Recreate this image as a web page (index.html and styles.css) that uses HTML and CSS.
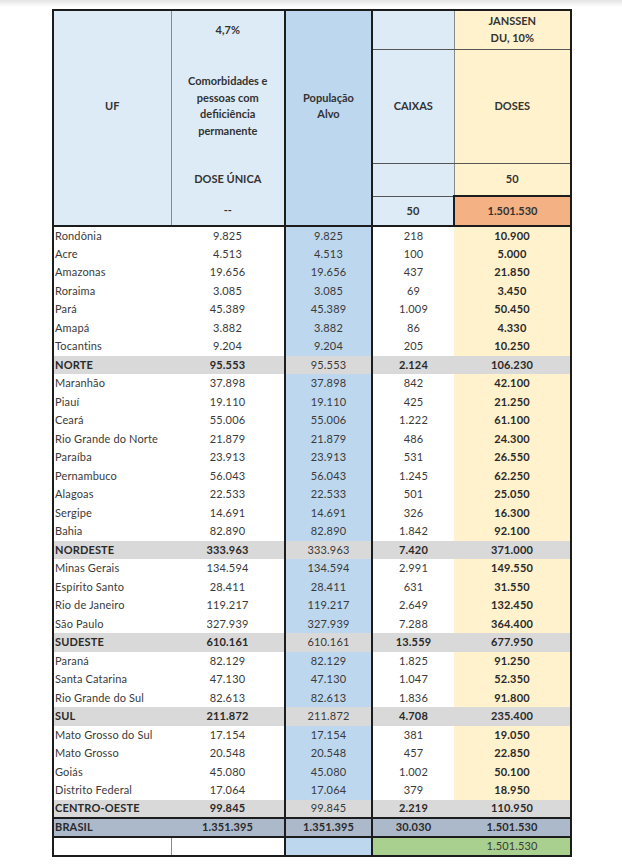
FILE: index.html
```html
<!DOCTYPE html>
<html lang="pt-BR">
<head>
<meta charset="utf-8">
<title>Distribuição Janssen</title>
<link rel="stylesheet" href="styles.css">
</head>
<body>
<div class="sheet">
<table class="grid">
<colgroup>
<col class="w-uf"><col class="w-com"><col class="w-pop"><col class="w-cx"><col class="w-ds">
</colgroup>
<thead>
<tr class="h1">
  <td class="c-uf"></td>
  <td class="c-com">4,7%</td>
  <td class="c-pop"></td>
  <td class="c-cx hb"></td>
  <td class="c-ds hb">JANSSEN<br>DU, 10%</td>
</tr>
<tr class="h2">
  <td class="c-uf">UF</td>
  <td class="c-com">Comorbidades e<br>pessoas com<br>defiiciência<br>permanente</td>
  <td class="c-pop">População<br>Alvo</td>
  <td class="c-cx hb">CAIXAS</td>
  <td class="c-ds hb">DOSES</td>
</tr>
<tr class="h3">
  <td class="c-uf"></td>
  <td class="c-com">DOSE ÚNICA</td>
  <td class="c-pop"></td>
  <td class="c-cx hb"></td>
  <td class="c-ds hbk">50</td>
</tr>
<tr class="h4">
  <td class="c-uf"></td>
  <td class="c-com">--</td>
  <td class="c-pop"></td>
  <td class="c-cx">50</td>
  <td class="c-ds c-hot">1.501.530</td>
</tr>
</thead>
<tbody>
<tr><td>Rondônia</td><td>9.825</td><td>9.825</td><td>218</td><td>10.900</td></tr>
<tr><td>Acre</td><td>4.513</td><td>4.513</td><td>100</td><td>5.000</td></tr>
<tr><td>Amazonas</td><td>19.656</td><td>19.656</td><td>437</td><td>21.850</td></tr>
<tr><td>Roraima</td><td>3.085</td><td>3.085</td><td>69</td><td>3.450</td></tr>
<tr><td>Pará</td><td>45.389</td><td>45.389</td><td>1.009</td><td>50.450</td></tr>
<tr><td>Amapá</td><td>3.882</td><td>3.882</td><td>86</td><td>4.330</td></tr>
<tr><td>Tocantins</td><td>9.204</td><td>9.204</td><td>205</td><td>10.250</td></tr>
<tr class="sub"><td>NORTE</td><td>95.553</td><td>95.553</td><td>2.124</td><td>106.230</td></tr>
<tr><td>Maranhão</td><td>37.898</td><td>37.898</td><td>842</td><td>42.100</td></tr>
<tr><td>Piauí</td><td>19.110</td><td>19.110</td><td>425</td><td>21.250</td></tr>
<tr><td>Ceará</td><td>55.006</td><td>55.006</td><td>1.222</td><td>61.100</td></tr>
<tr><td>Rio Grande do Norte</td><td>21.879</td><td>21.879</td><td>486</td><td>24.300</td></tr>
<tr><td>Paraíba</td><td>23.913</td><td>23.913</td><td>531</td><td>26.550</td></tr>
<tr><td>Pernambuco</td><td>56.043</td><td>56.043</td><td>1.245</td><td>62.250</td></tr>
<tr><td>Alagoas</td><td>22.533</td><td>22.533</td><td>501</td><td>25.050</td></tr>
<tr><td>Sergipe</td><td>14.691</td><td>14.691</td><td>326</td><td>16.300</td></tr>
<tr><td>Bahia</td><td>82.890</td><td>82.890</td><td>1.842</td><td>92.100</td></tr>
<tr class="sub"><td>NORDESTE</td><td>333.963</td><td>333.963</td><td>7.420</td><td>371.000</td></tr>
<tr><td>Minas Gerais</td><td>134.594</td><td>134.594</td><td>2.991</td><td>149.550</td></tr>
<tr><td>Espírito Santo</td><td>28.411</td><td>28.411</td><td>631</td><td>31.550</td></tr>
<tr><td>Rio de Janeiro</td><td>119.217</td><td>119.217</td><td>2.649</td><td>132.450</td></tr>
<tr><td>São Paulo</td><td>327.939</td><td>327.939</td><td>7.288</td><td>364.400</td></tr>
<tr class="sub"><td>SUDESTE</td><td>610.161</td><td>610.161</td><td>13.559</td><td>677.950</td></tr>
<tr><td>Paraná</td><td>82.129</td><td>82.129</td><td>1.825</td><td>91.250</td></tr>
<tr><td>Santa Catarina</td><td>47.130</td><td>47.130</td><td>1.047</td><td>52.350</td></tr>
<tr><td>Rio Grande do Sul</td><td>82.613</td><td>82.613</td><td>1.836</td><td>91.800</td></tr>
<tr class="sub"><td>SUL</td><td>211.872</td><td>211.872</td><td>4.708</td><td>235.400</td></tr>
<tr><td>Mato Grosso do Sul</td><td>17.154</td><td>17.154</td><td>381</td><td>19.050</td></tr>
<tr><td>Mato Grosso</td><td>20.548</td><td>20.548</td><td>457</td><td>22.850</td></tr>
<tr><td>Goiás</td><td>45.080</td><td>45.080</td><td>1.002</td><td>50.100</td></tr>
<tr><td>Distrito Federal</td><td>17.064</td><td>17.064</td><td>379</td><td>18.950</td></tr>
<tr class="sub"><td>CENTRO-OESTE</td><td>99.845</td><td>99.845</td><td>2.219</td><td>110.950</td></tr>
<tr class="total"><td>BRASIL</td><td>1.351.395</td><td>1.351.395</td><td>30.030</td><td>1.501.530</td></tr>
<tr class="last"><td></td><td></td><td></td><td class="green"></td><td class="green">1.501.530</td></tr>
</tbody>
</table>
</div>
</body>
</html>
```
FILE: styles.css
```css
html, body {
  margin: 0;
  padding: 0;
}
body {
  background: #fff linear-gradient(#e4e4e4, #ffffff 7px) no-repeat;
  font-family: Lato, "Open Sans", "Liberation Sans", sans-serif;
  color: #333;
}
.sheet {
  padding: 9px 0 0 52px;
}
.grid {
  border-collapse: collapse;
  table-layout: fixed;
  width: 518px;
  border: 2px solid #1c1c1c;
}
.w-uf { width: 118px; }
.w-com { width: 114px; }
.w-pop { width: 87px; }
.w-cx { width: 82px; }
.w-ds { width: 117px; }

.grid td {
  padding: 0;
  text-align: center;
  vertical-align: middle;
  white-space: nowrap;
}

/* header */
thead td {
  font-weight: 700;
  font-size: 11px;
  line-height: 16.5px;
  color: #333;
}
.h1 { height: 39px; }
.h2 { height: 114px; }
.h3 { height: 33px; }
.h4 { height: 30px; }
thead .c-uf { background: #ddebf7; border-right: 1px solid #8a8a8a; }
thead .c-com { background: #ddebf7; border-right: 2px solid #1c1c1c; }
thead .c-pop { background: #bdd7ee; border-right: 2px solid #1c1c1c; }
thead .c-cx { background: #ddebf7; border-right: 1px solid #8a8a8a; }
thead .c-ds { background: #fff2cc; }
.hb { border-bottom: 1px solid #555; }
.hbk { border-bottom: 2px solid #1c1c1c; }
.h4 td { border-bottom: 2px solid #1c1c1c; }
.h4 .c-cx { border-right: 2px solid #1c1c1c; }
.c-hot { background: #f4b183 !important; border-right: 2px solid #1c1c1c; }

/* body */
tbody tr { height: 18.5px; }
tbody td {
  font-size: 11px;
  line-height: 14px;
  color: #3a3a3a;
  letter-spacing: 0.15px;
}
tbody td:nth-child(1) {
  text-align: left;
  padding-left: 1px;
  background: #fff;
}
tbody td:nth-child(2) { background: #fff; border-right: 2px solid #1c1c1c; }
tbody td:nth-child(3) { background: #bdd7ee; border-right: 2px solid #1c1c1c; }
tbody td:nth-child(4) { background: #fff; }
tbody td:nth-child(5) { background: #fff2cc; font-weight: 700; color: #2a2a2a; }

tbody tr.sub td { background: #d9d9d9; font-weight: 700; color: #2a2a2a; }
tbody tr.sub td:nth-child(3) { font-weight: 400; color: #3a3a3a; }

tbody tr.total td {
  background: #acb9ca;
  font-weight: 700;
  color: #2a2a2a;
  border-top: 2px solid #1c1c1c;
  border-bottom: 2px solid #1c1c1c;
}

tbody tr.last { height: 19px; }
tbody tr.last td:nth-child(1) { border-right: 1px solid #8a8a8a; }
tbody tr.last td.green {
  background: #a9d08e;
  font-weight: 400;
  color: #3a3a3a;
}
```
